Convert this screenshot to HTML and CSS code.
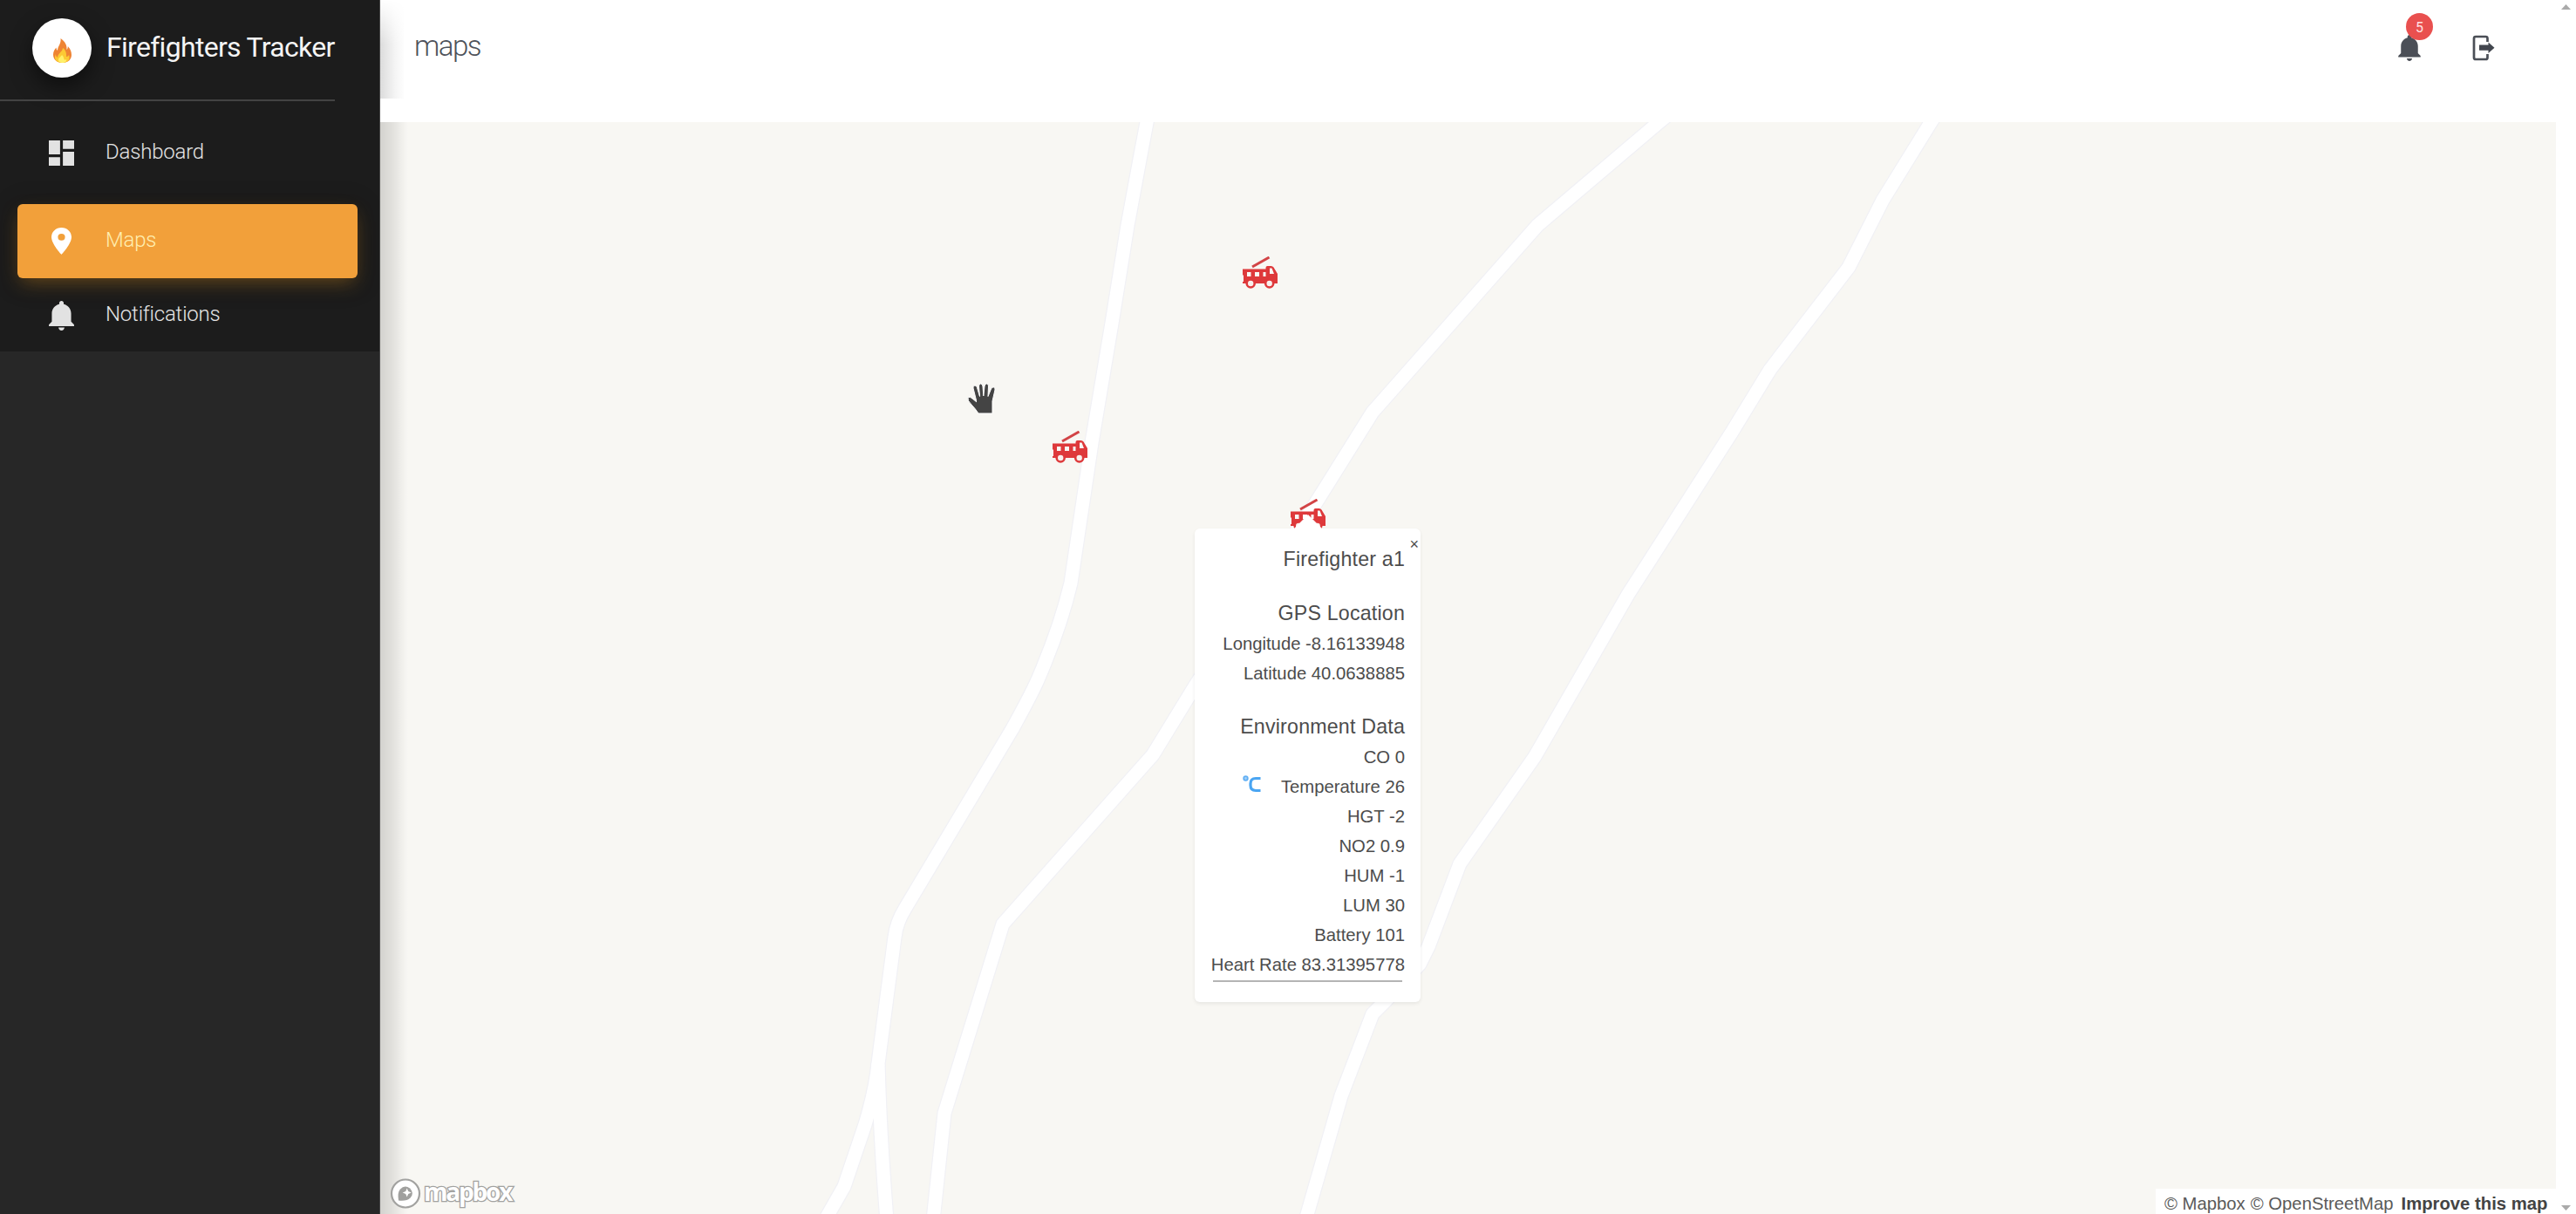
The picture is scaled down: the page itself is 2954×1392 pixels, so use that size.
FILE: index.html
```html
<!DOCTYPE html>
<html lang="en">
<head>
<meta charset="utf-8">
<title>Firefighters Tracker</title>
<link rel="stylesheet" href="styles.css">
</head>
<body>
<svg width="0" height="0" class="defs">
  <symbol id="bell" viewBox="3 2 17 20"><path d="M11.5 22c1.1 0 2-.9 2-2h-4c0 1.1.9 2 2 2zm6.500-6v-5.500c0-3.070-2.130-5.640-5-6.320V3.500c0-.83-.67-1.500-1.500-1.500S10 2.670 10 3.500v.68c-2.870.68-5 3.250-5 6.320V16l-2 2v1h17v-1l-2-2z"/></symbol>
  <symbol id="truck" viewBox="0 0 40 37">
    <path d="M11 12 30.500 1" stroke="#d24446" stroke-width="3" fill="none"/>
    <path d="M0 14.500h26.500v-1.500q0-2 2-2h4q2 0 3 1.500l4.500 7.500v11H0v-2h1v-7.500H0zM5 18v5h4.500v-5zM14 18v5h5v-5zM23.500 18v5h3v-5zM31 13.500v6.500h5l-2.500-6.500z" fill="#de393b" fill-rule="evenodd"/>
    <circle cx="9.200" cy="31" r="4.500" fill="#f8f0ed" stroke="#de393b" stroke-width="2.600"/>
    <circle cx="30.700" cy="31" r="4.500" fill="#f8f0ed" stroke="#de393b" stroke-width="2.600"/>
  </symbol>
</svg>
<div class="app">
  <aside class="sidebar">
    <div class="brand">
      <span class="logo"><svg width="21" height="28" viewBox="0 0 21 28"><path d="M8.500 0C14 4 16 8 15.500 13c1-1 1.500-2.500 1.300-4C20 12 21 16 21 19c0 5-4 9-10.500 9S0 24 0 18.500C0 15 2 12 3.500 10.500 3.500 12 4 13 5 14 5 9 9.500 6 8.500 0z" fill="#ee8434"/><path d="M11 11c-.5 5-6 6-6 11-2-1-2-3-2-4-3 6 1 10 7.500 10S20 24 18 19c-.5 1-1.500 2-3 2 .5-4-1-8-4-10z" fill="#fcc934"/><path d="M10 19c-1 2-4 3-4 6 0 2 2 3 4.500 3s5-1 4.500-4c-1 1-2 1-2.500 0-.5-2-1-4-2.500-5z" fill="#fff06a"/></svg></span>
      <span class="brand-name">Firefighters Tracker</span>
    </div>
    <nav class="nav">
      <a class="item"><span class="ico"><svg width="29" height="29" viewBox="3 3 18 18"><path d="M3 13h8V3H3v10zm0 8h8v-6H3v6zm10 0h8V11h-8v10zm0-18v6h8V3h-8z"/></svg></span><span class="label">Dashboard</span></a>
      <a class="item active"><span class="ico"><svg width="23" height="31" viewBox="5 2 14 20" preserveAspectRatio="none"><path d="M12 2C8.130 2 5 5.130 5 9c0 5.250 7 13 7 13s7-7.750 7-13c0-3.870-3.130-7-7-7zm0 9.500a2.500 2.500 0 0 1 0-5 2.500 2.500 0 0 1 0 5z"/></svg></span><span class="label">Maps</span></a>
      <a class="item"><span class="ico"><svg width="29" height="34"><use href="#bell"/></svg></span><span class="label">Notifications</span></a>
    </nav>
  </aside>
  <main class="main">
    <header class="header">
      <h1 class="title">maps</h1>
      <div class="actions">
        <span class="alerts"><svg width="26" height="30"><use href="#bell"/></svg><span class="badge">5</span></span>
        <svg class="logout" width="26" height="30" viewBox="0 0 26 30"><path d="M17.500 8V4q0-2-2-2H4Q2 2 2 4v22q0 2 2 2h11.500q2 0 2-2v-4" fill="none" stroke="#4b4f57" stroke-width="2.700"/><path d="M8 11.500h10.500V8.500l7 6.300-7 6.300v-3.300H8z" fill="#42464e"/></svg>
      </div>
    </header>
    <section class="map">
      <svg class="roads" viewBox="436 141 2495 1251">
        <defs>
          <g id="lines">
            <path d="M1319 122 1315 141 1308 178 1293 259 1275 371 1252 508 1228 669Q1216 720 1190 780 1182 798 1161 836L1038 1042Q1028 1058 1026 1075L1007 1220Q1009 1300 1017 1400"/>
            <path d="M1007 1220Q1004 1250 992 1290L968 1361 948 1396"/>
            <path d="M1925 122 1902 141 1763 259 1574 473 1509 577 1440 680 1371 786 1322 866 1150 1060 1083 1277 1070 1400"/>
            <path d="M2226 122 2214 141 2159 230 2120 307 2030 424 1986 496 1867 682 1760 868 1674 991 1638 1086 1628 1106 1589 1148 1574 1163 1538 1257 1497 1400"/>
          </g>
        </defs>
        <use href="#lines" class="casing"/>
        <use href="#lines" class="road"/>
      </svg>
      <svg class="marker m1" width="40" height="37"><use href="#truck"/></svg>
      <svg class="marker m2" width="40" height="37"><use href="#truck"/></svg>
      <svg class="marker m3" width="40" height="37"><use href="#truck"/></svg>
      <svg class="hand" width="36" height="37" viewBox="0 0 36 37"><path d="M2 17q2-2 5 1l5 4-4-16q-.5-3 2-3 2 0 2.500 2.500l3 10L14.500 4q0-3 2-3t2.500 3l.8 11L21 4q.3-3 2.500-3t2 3L25 15.500 28.500 7q1-2.500 3-2t1.500 3l-3 13v14H14q-4-6-8-10-5-5-4-8z" fill="#444" stroke="#fff" stroke-width="1"/><path d="M12 17h14v6H12z" fill="#444"/></svg>
      <div class="popup">
        <span class="close">×</span>
        <h2 class="name">Firefighter a1</h2>
        <h2>GPS Location</h2>
        <p>Longitude -8.16133948</p>
        <p>Latitude 40.0638885</p>
        <h2>Environment Data</h2>
        <p>CO 0</p>
        <p class="temp"><svg width="21" height="20" viewBox="0 0 21 20"><circle cx="3.500" cy="3.500" r="2.300" fill="#a4d0f8" stroke="#62b0f4" stroke-width="1.800"/><path d="M20.500 3.500H15q-6 0-6 6v2q0 6 6 6h5.500" fill="none" stroke="#4aa5f2" stroke-width="3.200"/></svg>Temperature 26</p>
        <p>HGT -2</p>
        <p>NO2 0.9</p>
        <p>HUM -1</p>
        <p>LUM 30</p>
        <p>Battery 101</p>
        <p>Heart Rate 83.31395778</p>
        <div class="rule"></div>
      </div>
      <div class="mapbox">
        <svg width="36" height="37" viewBox="0 0 36 37"><circle cx="18" cy="18.500" r="16" fill="#fff" stroke="#a2a2a0" stroke-width="2.200"/><path d="M10 26.500q-1.500-9 2-13 5-5.500 11-1 5.500 5.500.5 11-4 4-13.500 3z" fill="#a0a09e"/><path d="m19.700 12.500 1.500 3.500 3.500 1.500-3.500 1.500-1.500 3.500-1.500-3.500-3.500-1.500 3.500-1.500z" fill="#fff"/></svg>
        <span class="wordmark">mapbox</span>
      </div>
      <div class="attribution"><span>© Mapbox</span><span>© OpenStreetMap</span><b>Improve this map</b></div>
    </section>
  </main>
  <div class="scrollbar">
    <svg width="11" height="6" viewBox="0 0 11 6"><path d="M0 6 5.500 0 11 6z"/></svg>
    <svg width="11" height="6" viewBox="0 0 11 6"><path d="M0 0h11L5.500 6z"/></svg>
  </div>
</div>
</body>
</html>
```
FILE: styles.css
```css
* { box-sizing: border-box; }
body { margin: 0; background: #fff; font-family: Roboto, sans-serif; overflow: hidden; }
.defs { position: absolute; }
.app { display: grid; grid-template-columns: 436px 1fr 23px; height: 1392px; }

.sidebar { background: linear-gradient(#1c1c1c 403px, #272727 403px); border-right: 1px solid #484848; }
.brand { position: relative; display: flex; align-items: center; height: 116px; padding: 0 0 6px 37px; }
.brand::after { content: ""; position: absolute; left: 0; bottom: 0; width: 384px; height: 2px; background: #434343; }
.logo { display: flex; align-items: center; justify-content: center; width: 68px; height: 68px; padding-top: 6px; border-radius: 50%; background: #fff; box-shadow: 0 10px 24px rgba(0, 0, 0, .5); }
.brand-name { margin: -3px 0 0 17px; font-size: 32px; line-height: 40px; color: #f4f4f4; letter-spacing: -.7px; white-space: nowrap; }
.nav { display: flex; flex-direction: column; padding: 17px 25px 0 20px; }
.item { display: flex; align-items: center; height: 85px; border-radius: 6px; font-size: 24px; font-weight: 300; color: #e4e4e4; fill: #e2e2e2; letter-spacing: -.2px; }
.active { margin-top: 16px; background: #f2a03a; color: #ffeeb0; fill: #fff; box-shadow: 0 8px 22px -4px rgba(242, 160, 40, .38), 0 4px 30px rgba(0, 0, 0, .3); }
.ico { display: flex; justify-content: center; width: 101px; }
.label { line-height: 30px; margin-top: -3px; }

.main { display: flex; flex-direction: column; min-width: 0; }
.header { position: relative; display: flex; justify-content: space-between; height: 140px; padding-left: 39px; }
.header::before { content: ""; position: absolute; left: 0; top: 0; width: 27px; height: 113px; background: linear-gradient(90deg, #dcdcdc, #f5f5f5 65%, #fdfdfd); -webkit-mask-image: linear-gradient(transparent, #000 45%); }
.title { position: relative; margin: 33px 0 0; font-size: 33px; font-weight: 300; line-height: 40px; color: #4e525a; letter-spacing: -1.5px; }
.actions { display: flex; gap: 59px; padding: 40px 70px 0 0; }
.alerts { position: relative; width: 26px; height: 30px; fill: #4b4f57; }
.badge { position: absolute; left: 9px; top: -25px; width: 31px; height: 31px; border-radius: 50%; background: #e9504f; color: #ffe2e2; font-size: 16px; line-height: 33px; text-align: center; }

.map { position: relative; flex: 1; background: #f8f7f3; }
.map::before { content: ""; position: absolute; left: 0; top: 0; bottom: 0; width: 32px; background: linear-gradient(90deg, rgba(0,0,0,.15), rgba(0,0,0,.09) 45%, rgba(0,0,0,.02) 85%, transparent); }
.roads { display: block; width: 100%; height: 100%; fill: none; stroke-linejoin: round; }
.casing { stroke: #f1f1f5; stroke-width: 17.5px; }
.road { stroke: #fff; stroke-width: 15px; }
.marker, .hand { position: absolute; }
.m1 { left: 989px; top: 154px; }
.m2 { left: 771px; top: 354px; }
.m3 { left: 1044px; top: 432px; }
.hand { left: 672px; top: 299px; }

.popup { position: absolute; left: 934px; top: 466px; width: 259px; height: 543px; padding: 17px 18px 0 0; border-radius: 6px; background: #fff; box-shadow: 0 2px 4px rgba(0, 0, 0, .07); color: #4c4c4c; font-family: "Liberation Sans", sans-serif; text-align: right; }
.popup::before { content: ""; position: absolute; left: 114px; top: -16px; border: 16px solid transparent; border-top: 0; border-bottom-color: #fff; }
.popup h2 { margin: 0; font-size: 23.2px; font-weight: 400; line-height: 36px; letter-spacing: .2px; }
.popup .name { margin-bottom: 26px; }
.popup p { margin: 0; font-size: 20.3px; line-height: 34px; white-space: nowrap; }
.popup p + h2 { margin-top: 26px; }
.temp svg { margin-right: 23px; vertical-align: 0; }
.close { position: absolute; right: 2px; top: 8px; font-size: 18px; line-height: 20px; }
.rule { height: 2px; margin: 1px 3px 0 21px; background: #b4b4b4; }

.mapbox { position: absolute; left: 11px; bottom: 5px; display: flex; align-items: center; }
.wordmark { margin: -5px 0 0 3px; font: 700 28px/36px "Open Sans", sans-serif; color: #fff; -webkit-text-stroke: 2.6px #a2a2a0; paint-order: stroke fill; letter-spacing: -2.2px; }
.attribution { position: absolute; right: 0; bottom: 0; display: flex; width: 459px; height: 29px; padding-left: 10px; background: #fff; font: 20.3px/35px "Liberation Sans", sans-serif; color: #5a5a5a; white-space: nowrap; }
.attribution span { margin-right: 6px; }
.attribution b { margin-left: 3px; color: #444; }

.scrollbar { display: flex; flex-direction: column; align-items: center; justify-content: space-between; padding: 5px 0 4px; fill: #aaa; }
```
